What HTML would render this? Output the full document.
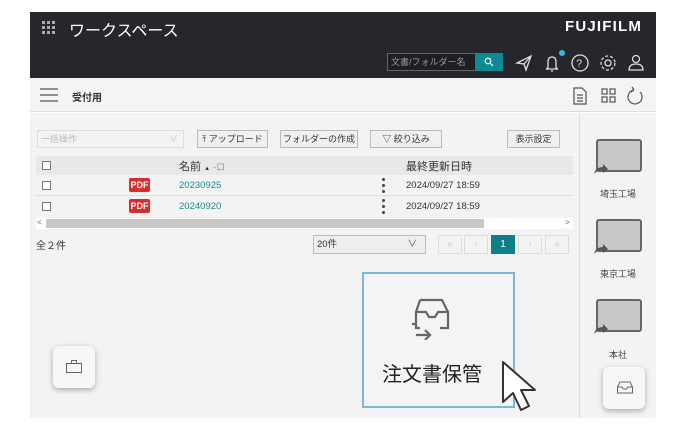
<!DOCTYPE html>
<html><head><meta charset="utf-8"><style>
*{margin:0;padding:0;box-sizing:border-box}
body{width:686px;height:431px;background:#fff;position:relative;overflow:hidden;font-family:"Liberation Sans","Noto Sans CJK JP",sans-serif;color:#333}
.a{position:absolute}
.btn{position:absolute;top:130px;height:18px;border:1px solid #bbb;background:#f0f0f0;font-size:9px;line-height:16px;text-align:center;color:#333}
.pg{position:absolute;top:235px;width:24px;height:19px;border:1px solid #ddd;background:#f3f3f3;color:#ccc;font-size:10px;text-align:center;line-height:17px}
.cb{position:absolute;width:9px;height:9px;border:1px solid #777;background:#fff}
.pdf{position:absolute;width:21px;height:14px;background:#d32f2f;color:#fff;font-size:9px;font-weight:bold;line-height:14px;text-align:center;border-radius:2px}
.lbl{position:absolute;width:76px;text-align:center;font-size:9px;color:#444}
.dots{position:absolute;width:3px;height:3px;border-radius:50%;background:#444;box-shadow:0 6px 0 #444,0 12px 0 #444}
</style></head><body>
<div class="a" style="left:30px;top:12px;width:626px;height:66px;background:#25272c"></div>
<svg class="a" style="left:42px;top:21px" width="14" height="14"><g fill="#aaa"><rect x="0" y="0" width="3" height="3"/><rect x="5" y="0" width="3" height="3"/><rect x="10" y="0" width="3" height="3"/><rect x="0" y="5" width="3" height="3"/><rect x="5" y="5" width="3" height="3"/><rect x="10" y="5" width="3" height="3"/><rect x="0" y="10" width="3" height="3"/><rect x="5" y="10" width="3" height="3"/><rect x="10" y="10" width="3" height="3"/></g></svg>
<div class="a" style="left:69px;top:17px;font-size:16px;color:#fff">ワークスペース</div>
<div class="a" style="left:565px;top:18px;font-size:15px;font-weight:bold;color:#fff;letter-spacing:1.2px">FUJIFILM</div>
<div class="a" style="left:387px;top:53px;width:89px;height:18px;border:1px solid #666;background:#1e1f22;font-size:9px;color:#999;line-height:16px;padding-left:3px">文書/フォルダー名</div>
<div class="a" style="left:476px;top:53px;width:27px;height:18px;background:#0e8a94"></div>
<svg class="a" style="left:484px;top:57px" width="10" height="10" fill="none" stroke="#fff" stroke-width="1.2"><circle cx="4" cy="4" r="2.8"/><path d="M6 6L9 9"/></svg>
<svg class="a" style="left:514px;top:53px" width="130" height="20" fill="none" stroke="#ddd" stroke-width="1.3">
<path d="M3 10 L17 3 L12 17 L10 11 Z M10 11 L17 3"/>
<path d="M34 15 L34 9 Q34 4 38 4 Q42 4 42 9 L42 15 L44 16 L32 16 Z M37 18 L39 18"/>
<circle cx="66" cy="10" r="8"/><text x="62" y="14" font-size="11" fill="#ddd" stroke="none" font-family="Liberation Sans">?</text>
<circle cx="94" cy="10" r="3"/><circle cx="94" cy="10" r="7" stroke-dasharray="3 2"/>
<circle cx="122" cy="6" r="3.5"/><path d="M115 17 Q115 11 122 11 Q129 11 129 17 Z"/>
</svg>
<div class="a" style="left:559px;top:50px;width:6px;height:6px;border-radius:50%;background:#36b8d8"></div>
<div class="a" style="left:30px;top:78px;width:626px;height:34px;background:#f4f4f4;border-bottom:1px solid #ddd"></div>
<svg class="a" style="left:40px;top:88px" width="18" height="14" stroke="#555" stroke-width="1.3"><path d="M0 1H18M0 7H18M0 13H18"/></svg>
<div class="a" style="left:72px;top:89px;font-size:10px;font-weight:bold">受付用</div>
<svg class="a" style="left:572px;top:86px" width="76" height="20" fill="none" stroke="#555" stroke-width="1.2">
<path d="M2 2H10L14 6V18H2Z M5 9H11M5 12H11M5 15H11"/>
<rect x="30" y="3" width="5" height="5"/><rect x="38" y="3" width="5" height="5"/><rect x="30" y="11" width="5" height="5"/><rect x="38" y="11" width="5" height="5"/>
<path d="M62 4 A7 7 0 1 0 68 6 M62 4 L60 1 M62 4 L59 6"/>
</svg>
<div class="a" style="left:30px;top:113px;width:626px;height:305px;background:#f3f3f3"></div>
<div class="a" style="left:579px;top:113px;width:1px;height:305px;background:#ddd"></div>
<div class="a" style="left:37px;top:130px;width:147px;height:18px;border:1px solid #ddd;background:#f3f3f3;font-size:9px;color:#bbb;line-height:16px;padding-left:3px">一括操作<span style="position:absolute;right:5px;color:#bbb">&#x2228;</span></div>
<div class="btn" style="left:197px;width:71px">&#x2912; アップロード</div>
<div class="btn" style="left:280px;width:78px">フォルダーの作成</div>
<div class="btn" style="left:370px;width:72px">&#x25BD; 絞り込み</div>
<div class="btn" style="left:507px;width:53px">表示設定</div>
<div class="a" style="left:36px;top:156px;width:537px;height:19px;background:#e8e8e8"></div>
<div class="a" style="left:36px;top:175px;width:537px;height:21px;border-bottom:1px solid #ddd"></div>
<div class="cb" style="left:42px;top:161px"></div>
<div class="a" style="left:179px;top:158px;font-size:11px">名前 <span style="font-size:6px">▲</span> <span style="color:#999;font-size:9px">-ロ</span></div>
<div class="a" style="left:406px;top:158px;font-size:11px">最終更新日時</div>
<div class="cb" style="left:42px;top:181px"></div><div class="pdf" style="left:129px;top:178px">PDF</div>
<div class="a" style="left:179px;top:180px;font-size:9.5px;color:#1a8a8a">20230925</div>
<div class="dots" style="left:382px;top:178px"></div>
<div class="a" style="left:406px;top:180px;font-size:9.5px">2024/09/27 18:59</div>
<div class="cb" style="left:42px;top:202px"></div><div class="pdf" style="left:129px;top:199px">PDF</div>
<div class="a" style="left:179px;top:201px;font-size:9.5px;color:#1a8a8a">20240920</div>
<div class="dots" style="left:382px;top:199px"></div>
<div class="a" style="left:406px;top:201px;font-size:9.5px">2024/09/27 18:59</div>
<div class="a" style="left:36px;top:218px;width:537px;height:11px;background:#fff"></div>
<div class="a" style="left:46px;top:219px;width:438px;height:9px;background:#c8c8c8"></div>
<div class="a" style="left:37px;top:218px;font-size:8px;color:#666">&lt;</div>
<div class="a" style="left:565px;top:218px;font-size:8px;color:#666">&gt;</div>
<div class="a" style="left:36px;top:237px;font-size:10px">全２件</div>
<div class="a" style="left:313px;top:235px;width:113px;height:19px;border:1px solid #bbb;background:#eee;font-size:9.5px;line-height:17px;padding-left:3px">20件<span style="position:absolute;right:8px;color:#555">&#x2228;</span></div>
<div class="pg" style="left:438px">«</div><div class="pg" style="left:464px">‹</div>
<div class="pg" style="left:491px;background:#0e7f8a;border-color:#0e7f8a;color:#fff">1</div>
<div class="pg" style="left:518px">›</div><div class="pg" style="left:545px">»</div>
<svg class="a" style="left:592px;top:138px" width="52" height="40"><rect x="5" y="2" width="44" height="31" rx="2" fill="#c8c8c8" stroke="#666" stroke-width="2"/><path d="M2 36 Q4 29 11 29 L11 26 L16 31 L11 35 L11 32 Q6 32 2 36Z" fill="#555"/></svg>
<div class="lbl" style="left:580px;top:187px">埼玉工場</div>
<svg class="a" style="left:592px;top:218px" width="52" height="40"><rect x="5" y="2" width="44" height="31" rx="2" fill="#c8c8c8" stroke="#666" stroke-width="2"/><path d="M2 36 Q4 29 11 29 L11 26 L16 31 L11 35 L11 32 Q6 32 2 36Z" fill="#555"/></svg>
<div class="lbl" style="left:580px;top:267px">東京工場</div>
<svg class="a" style="left:592px;top:298px" width="52" height="40"><rect x="5" y="2" width="44" height="31" rx="2" fill="#c8c8c8" stroke="#666" stroke-width="2"/><path d="M2 36 Q4 29 11 29 L11 26 L16 31 L11 35 L11 32 Q6 32 2 36Z" fill="#555"/></svg>
<div class="lbl" style="left:580px;top:348px">本社</div>
<div class="a" style="left:362px;top:272px;width:153px;height:136px;border:2px solid #7ab7dc;background:#f4f4f4"></div>
<svg class="a" style="left:410px;top:298px" width="50" height="42" fill="none" stroke="#666" stroke-width="2.2"><path d="M10 2H32L38 14V30H30 M10 30H6V14L10 2 M6 14H16L19 19H25L28 14H38 M6 30V26 M6 26 L2 26"/><path d="M6 37H20 M15 32L20 37L15 42"/></svg>
<div class="a" style="left:382px;top:358px;font-size:20px;color:#222">注文書保管</div>
<svg class="a" style="left:500px;top:360px" width="44" height="54"><path d="M3 2 L3 42 L13 33 L21 50 L29 46 L21 30 L35 30 Z" fill="#fff" stroke="#333" stroke-width="2" stroke-linejoin="round"/></svg>
<div class="a" style="left:53px;top:346px;width:42px;height:42px;background:#f7f7f7;border-radius:6px;box-shadow:0 2px 6px rgba(0,0,0,.3)"></div>
<svg class="a" style="left:65px;top:359px" width="18" height="15" fill="none" stroke="#666"><rect x="1.5" y="4.5" width="15" height="9"/><path d="M6.5 4.5V1.5H11.5V4.5"/></svg>
<div class="a" style="left:603px;top:367px;width:42px;height:42px;background:#f7f7f7;border-radius:6px;box-shadow:0 2px 6px rgba(0,0,0,.3)"></div>
<svg class="a" style="left:616px;top:380px" width="18" height="15" fill="none" stroke="#666"><path d="M4 2H14L16.5 7V13H1.5V7Z M1.5 7H6L7.5 9H10.5L12 7H16.5"/></svg>
</body></html>
